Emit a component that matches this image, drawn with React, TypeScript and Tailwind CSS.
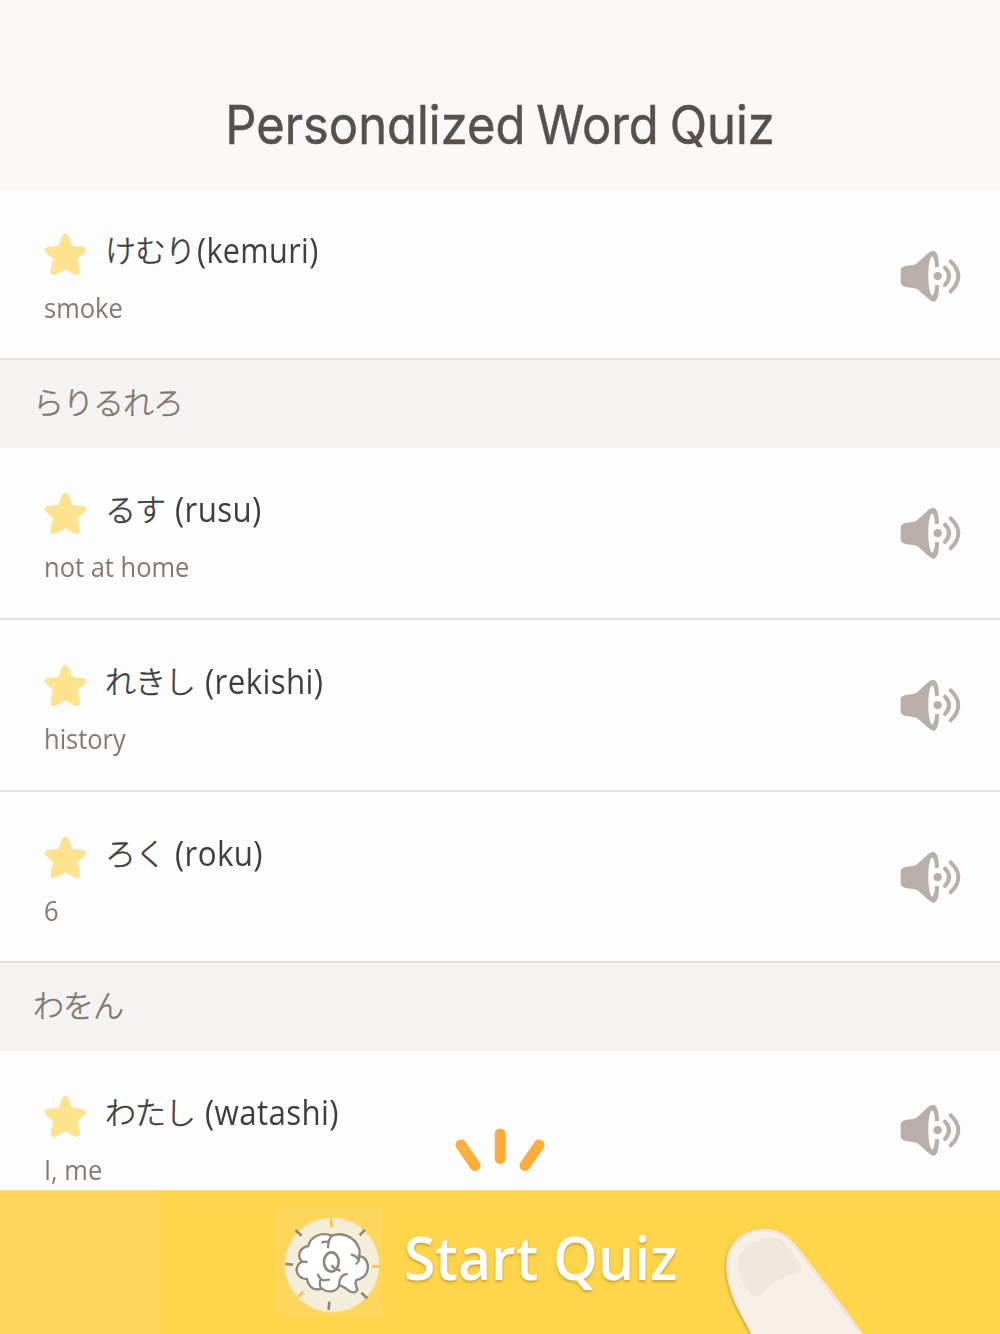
import clsx from "clsx";

interface Word {
  kana: string;
  romaji: string;
  meaning: string;
  spaced?: boolean;
}

interface Section {
  title?: string;
  words: Word[];
}

const sections: Section[] = [
  { words: [{ kana: "けむり", romaji: "(kemuri)", meaning: "smoke" }] },
  {
    title: "らりるれろ",
    words: [
      { kana: "るす", romaji: "(rusu)", meaning: "not at home", spaced: true },
      { kana: "れきし", romaji: "(rekishi)", meaning: "history", spaced: true },
      { kana: "ろく", romaji: "(roku)", meaning: "6", spaced: true },
    ],
  },
  {
    title: "わをん",
    words: [
      { kana: "わたし", romaji: "(watashi)", meaning: "I, me", spaced: true },
    ],
  },
];

export default function App() {
  return (
    <div className="relative flex h-[1334px] w-[1000px] flex-col overflow-hidden bg-[#fdfdfd] font-['Open_Sans','Noto_Sans_CJK_JP',sans-serif]">
      <header className="flex h-[190px] shrink-0 justify-center bg-[#faf9f7] pt-[93px]">
        <h1 className="h-16 origin-center scale-x-[0.922] font-['Inter',sans-serif] text-[53px] leading-[64px] font-normal [word-spacing:-3px] whitespace-nowrap text-[#56514d] [font-feature-settings:'cv11'] [-webkit-text-stroke:0.5px_#56514d]">
          Personalized Word Quiz
        </h1>
      </header>

      <main className="h-[1000px] shrink-0 overflow-hidden">
        {sections.map((section, i) => (
          <section key={i}>
            {section.title && (
              <h2 className="h-[88px] bg-[#f4f3f1] pt-[18px] pl-[33px] font-['Noto_Sans_CJK_JP',sans-serif] text-[31px] leading-[46px] font-light tracking-[-1px] text-[#81766e] [-webkit-text-stroke:0.5px_#81766e]">
                {section.title}
              </h2>
            )}
            {section.words.map((word, j) => (
              <WordRow
                key={word.kana}
                word={word}
                isFirst={i === 0}
                isLast={j === section.words.length - 1}
                isCutOff={i === sections.length - 1}
              />
            ))}
          </section>
        ))}
      </main>

      <StartButton />

      <svg
        className="absolute top-[1126px] left-[453px] h-[48px] w-[94px]"
        viewBox="453 1126 94 48"
        fill="none"
        stroke="#ffad3a"
        strokeWidth="11"
        strokeLinecap="round"
      >
        <path d="M461 1145 475 1165.500M500.200 1134V1158.500M539 1145 525 1165.500" />
      </svg>
    </div>
  );
}

interface WordRowProps {
  word: Word;
  isFirst: boolean;
  isLast: boolean;
  isCutOff: boolean;
}

function WordRow({ word, isFirst, isLast, isCutOff }: WordRowProps) {
  return (
    <div
      className={clsx(
        "flex justify-between border-b-2 border-[#e2e2e2] pr-[38px] pl-[43px]",
        isFirst ? "h-[170px] pt-[37px]" : "pt-[38px]",
        !isFirst && (isLast ? "h-[171px]" : "h-[172px]")
      )}
    >
      <div>
        <div className="flex h-[48px]">
          <StarIcon />
          <span className="-mt-px ml-[18px] font-['Noto_Sans_CJK_JP',sans-serif] text-[31px] leading-[46px] font-light tracking-[-1px] text-[#3c3c3c] [-webkit-text-stroke:0.5px_#3c3c3c]">
            {word.kana}
          </span>
          <span
            className={clsx(
              "origin-left text-[34px] leading-[46px] tracking-[0.4px] text-[#3f3f3f]",
              word.spaced ? "ml-[10px] scale-x-[0.92]" : "ml-[2px] scale-x-[0.9]"
            )}
          >
            {word.romaji}
          </span>
        </div>
        <p className="mt-[13px] ml-px origin-left scale-x-[0.91] text-[28px] leading-[38px] text-[#857a72]">
          {word.meaning}
        </p>
      </div>
      <button
        className={clsx(
          "h-[52px] w-[62px]",
          isCutOff ? "mt-[15px]" : isFirst ? "mt-[23px]" : "mt-[21px]"
        )}
      >
        <SpeakerIcon />
      </button>
    </div>
  );
}

function StartButton() {
  return (
    <button className="relative flex h-[144px] w-full shrink-0 border-t border-[#ffe07a] bg-[#ffd54b] text-left">
      <div className="h-full w-[160px] bg-[#fed65c]" />
      <div className="mt-[17px] ml-[116px] h-[108px] w-[106px] bg-[#ffd65c]">
        <BrainIcon />
      </div>
      <span className="mt-[25px] ml-[22px] origin-left scale-x-[0.967] text-[59px] leading-[82px] font-semibold whitespace-nowrap text-white [text-shadow:0_2px_3px_#a9822099]">
        Start Quiz
      </span>
      <svg
        className="absolute top-[33px] left-[720px] h-[110px] w-[150px] overflow-visible"
        viewBox="60 102 450 330"
      >
        <path
          d="M154 434C132 388 106 352 90 300C78 260 73 218 86 184C103 141 145 115 193 116C235 116 262 133 286 162C320 201 354 253 391 297C425 342 457 387 492 434Z"
          fill="#f1e4d9"
          style={{ filter: "drop-shadow(-3px 4px 3px #9d7a2888)" }}
        />
        <path
          d="M159 434C135 386 111 350 96 298C84 257 80 219 93 187C109 149 147 123 193 124C231 124 257 140 280 168C312 206 346 258 382 303C416 347 448 392 480 434Z"
          fill="#f8efe6"
        />
        <path
          d="M153 311C137 293 121 271 114 241C109 207 125 182 145 166C169 148 210 137 237 147C261 163 282 195 301 221C307 235 302 242 288 247C244 261 211 284 186 309C175 321 162 322 153 311Z"
          fill="#f0e6dc"
        />
      </svg>
    </button>
  );
}

function StarIcon() {
  return (
    <svg className="mt-[6px] h-[44px] w-[44px]" viewBox="0 0 44 44">
      <path
        d="M19.200 3.200Q22.300 -1.300 25.400 3.200L29 13.300 40 14.300Q44.800 15.500 41.400 19.700L34.300 26 36.700 38.200Q36.800 42.800 32.400 41.600L22.300 36.200 12.200 41.600Q7.800 42.800 7.900 38.200L10.300 26 3.200 19.700Q-0.200 15.500 4.600 14.300L15.600 13.300Z"
        fill="#fde38c"
        stroke="#fbe2b5"
        strokeWidth="0.8"
        strokeLinejoin="round"
      />
    </svg>
  );
}

function SpeakerIcon() {
  return (
    <svg
      className="h-[52px] w-[62px]"
      viewBox="60 43 186 156"
      fill="none"
      stroke="#b9afa8"
      strokeLinecap="round"
    >
      <path
        d="M62 100Q66 92 82 90L103 87Q112 84 122 73L142 54Q152 45 161 45C174 49 177 74 177 93L165 95C165 80 162 64 157 62C148 66 145 94 145 121C145 148 149 176 157 180C162 178 165 162 165 148L177 149C177 174 174 193 163 198Q154 199 143 188L121 168Q111 158 103 158L82 155Q66 153 62 143Z"
        fill="#b9afa8"
        stroke="none"
      />
      <circle cx="173" cy="121.500" r="12.500" fill="#b9afa8" stroke="none" />
      <path d="M195 96Q219 121 195 148M212 77Q258 121 212 167" strokeWidth="12" />
    </svg>
  );
}

function BrainIcon() {
  return (
    <svg
      className="h-[108px] w-[106px]"
      viewBox="48 54 318 324"
      fill="none"
      strokeLinecap="round"
      strokeLinejoin="round"
    >
      <circle
        cx="216"
        cy="225"
        r="141"
        fill="#f3edda"
        stroke="#f6e6ae"
        strokeWidth="3"
        strokeDasharray="9 4 5 3"
      />
      <g stroke="#91857c" strokeWidth="7">
        <path
          d="M145 168C151 139 184 125 216 137C248 124 283 143 295 170C300 180 300 189 297 198C320 201 329 225 320 248C315 259 304 267 289 270C282 282 292 292 292 300C287 309 274 309 265 301C255 293 249 288 237 286C233 304 206 311 184 295C168 303 146 295 141 267C117 267 105 246 112 230C115 222 120 218 126 215C112 202 115 174 145 168Z"
          fill="#fff"
        />
        <path d="M216 137Q205 147 204 172M187 157Q197 153 207 157M126 215L140 216M275 194Q291 199 297 211M297 198Q300 212 290 221M174 254Q178 267 191 271L207 269M184 295Q177 287 181 271M237 286C237 266 244 254 260 252" />
        <ellipse cx="214" cy="216" rx="22" ry="29" strokeWidth="8" />
        <path d="M217 228Q219 235 238 241" strokeWidth="8" />
      </g>
      <g strokeWidth="8" strokeLinecap="butt">
        <path
          d="M107 121 125 137M315 119 299 136M76 222 99 224M208 335 206 360M304 308 322 325"
          stroke="#91857c"
        />
        <path d="M213 85 215 112M336 229 360 229M130 304 115 321" stroke="#ffc34d" />
      </g>
    </svg>
  );
}
